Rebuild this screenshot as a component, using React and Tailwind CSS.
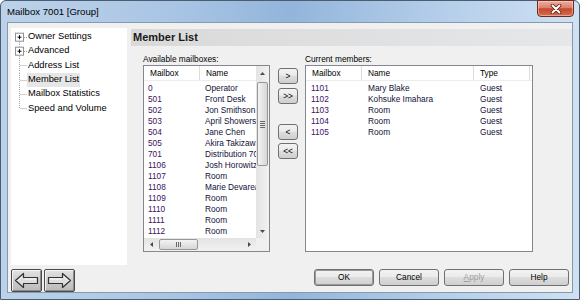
import React from 'react';

// rows of the "Available mailboxes" list
const available = [
  ['0', 'Operator'],
  ['501', 'Front Desk'],
  ['502', 'Jon Smithson'],
  ['503', 'April Showers'],
  ['504', 'Jane Chen'],
  ['505', 'Akira Takizawa'],
  ['701', 'Distribution 701'],
  ['1106', 'Josh Horowitz'],
  ['1107', 'Room'],
  ['1108', 'Marie Devareaux'],
  ['1109', 'Room'],
  ['1110', 'Room'],
  ['1111', 'Room'],
  ['1112', 'Room'],
];

const members = [
  ['1101', 'Mary Blake', 'Guest'],
  ['1102', 'Kohsuke Imahara', 'Guest'],
  ['1103', 'Room', 'Guest'],
  ['1104', 'Room', 'Guest'],
  ['1105', 'Room', 'Guest'],
];

const tree = [
  { label: 'Owner Settings', kind: 'plus-first' },
  { label: 'Advanced', kind: 'plus' },
  { label: 'Address List', kind: 'leaf' },
  { label: 'Member List', kind: 'leaf', selected: true },
  { label: 'Mailbox Statistics', kind: 'leaf' },
  { label: 'Speed and Volume', kind: 'last' },
];

const Tri = ({ dir }) => {
  if (dir === 'up') return <svg width="5" height="3" viewBox="0 0 5 3"><path d="M0 3 L2.5 0 L5 3 Z" fill="#4a4a4a" /></svg>;
  if (dir === 'down') return <svg width="5" height="3" viewBox="0 0 5 3"><path d="M0 0 L5 0 L2.5 3 Z" fill="#4a4a4a" /></svg>;
  if (dir === 'left') return <svg width="3" height="5" viewBox="0 0 3 5"><path d="M3 0 L3 5 L0 2.5 Z" fill="#4a4a4a" /></svg>;
  return <svg width="3" height="5" viewBox="0 0 3 5"><path d="M0 0 L0 5 L3 2.5 Z" fill="#4a4a4a" /></svg>;
};

// tree connector lines + expand boxes
const TreeGutter = ({ kind }) => (
  <svg width="17" height="14.4" viewBox="0 0 17 14.4" className="shrink-0">
    {kind === 'plus-first' && <line x1="8.5" y1="11.7" x2="8.5" y2="14.4" stroke="#a0a0a0" strokeDasharray="1 1" />}
    {kind === 'plus' && (
      <>
        <line x1="8.5" y1="0" x2="8.5" y2="2.7" stroke="#a0a0a0" strokeDasharray="1 1" />
        <line x1="8.5" y1="11.7" x2="8.5" y2="14.4" stroke="#a0a0a0" strokeDasharray="1 1" />
      </>
    )}
    {(kind === 'plus' || kind === 'plus-first') && (
      <>
        <rect x="4.5" y="3.2" width="8" height="8" fill="#fff" stroke="#919191" />
        <line x1="6.5" y1="7.2" x2="10.5" y2="7.2" stroke="#000" />
        <line x1="8.5" y1="5.2" x2="8.5" y2="9.2" stroke="#000" />
        <line x1="13" y1="7.5" x2="16" y2="7.5" stroke="#a0a0a0" strokeDasharray="1 1" />
      </>
    )}
    {kind === 'leaf' && <line x1="8.5" y1="0" x2="8.5" y2="14.4" stroke="#a0a0a0" strokeDasharray="1 1" />}
    {kind === 'last' && <line x1="8.5" y1="0" x2="8.5" y2="7.5" stroke="#a0a0a0" strokeDasharray="1 1" />}
    {(kind === 'leaf' || kind === 'last') && <line x1="9.5" y1="7.5" x2="16" y2="7.5" stroke="#a0a0a0" strokeDasharray="1 1" />}
  </svg>
);

const Btn = ({ children, className }) => (
  <div className={`flex items-center justify-center rounded-[3px] border border-[#707070] bg-[linear-gradient(#f2f2f2_0%,#ebebeb_45%,#dddddd_50%,#cfcfcf_100%)] text-[8.3px] ${className}`}>
    {children}
  </div>
);

const NavArrow = ({ flip }) => (
  <div className="flex h-[23px] w-[31px] items-center justify-center rounded-[2px] border border-[#4a4a4a] bg-[linear-gradient(#e2e2e2,#b9b9b9)] shadow-[inset_1px_1px_0_#f4f4f4,inset_-1px_-1px_0_#8c8c8c]">
    <svg width="25" height="17" viewBox="0 0 25 17" className={flip ? 'scale-x-[-1]' : ''}>
      <path d="M1.5 8.5 L9.5 1.5 L9.5 5.5 L23.5 5.5 L23.5 11.5 L9.5 11.5 L9.5 15.5 Z" fill="#dedede" stroke="#333" strokeWidth="1.2" strokeLinejoin="round" />
      <path d="M4 8.5 L8 5 M10.5 7 L22 7" stroke="#fafafa" strokeWidth="1" fill="none" />
    </svg>
  </div>
);

const HeaderCell = ({ children, className }) => (
  <div className={`flex h-full shrink-0 items-center border-r border-[#dcdcdc] pl-[6px] ${className}`}>{children}</div>
);

export default function App() {
  return (
    <div className="h-[300px] w-[580px] overflow-hidden bg-white font-['Liberation_Sans',Arial,sans-serif]">
      <div className="flex h-full w-full flex-col rounded-t-[6px] border border-[#4c5d70] bg-[linear-gradient(90deg,#bcd2ea_0%,#a9c5e4_30%,#93b5db_50%,#b3cde9_75%,#cfe1f3_100%)]">
        {/* title bar */}
        <div className="flex h-[21px] shrink-0 items-start justify-between pl-[6px] pr-[5px]">
          <span className="text-[9.6px] leading-[21px] text-black">Mailbox 7001 [Group]</span>
          <div className="-mt-[1px] flex h-[17px] w-[37px] items-center justify-center rounded-b-[4px] border border-[#6e2a1d] bg-[linear-gradient(#eab0a2_0%,#dc806c_45%,#c5472d_52%,#d4704f_100%)] shadow-[inset_0_0_0_1px_rgba(255,220,210,0.5)]">
            <svg width="12" height="10" viewBox="0 0 12 10">
              <path d="M2.5 1.5 L9.5 8.5 M9.5 1.5 L2.5 8.5" stroke="#5a1c12" strokeWidth="3.6" strokeLinecap="round" />
              <path d="M2.5 1.5 L9.5 8.5 M9.5 1.5 L2.5 8.5" stroke="#fff" strokeWidth="2" strokeLinecap="round" />
            </svg>
          </div>
        </div>

        {/* client area */}
        <div className="mx-[6px] mb-[6px] flex flex-1 flex-col border border-[#8799ad] bg-[#f0f0f0]">
          <div className="flex h-[242px] shrink-0 pl-[3px] pt-[5px]">
            {/* navigation tree */}
            <div className="h-[237px] w-[116px] shrink-0 bg-white pt-[1.5px] text-[9.3px] text-black">
              {tree.map((t) => (
                <div key={t.label} className="flex h-[14.4px] items-center pl-0">
                  <TreeGutter kind={t.kind} />
                  <span className={`flex h-full items-center whitespace-nowrap px-[1px] -ml-[1px] ${t.selected ? 'bg-[#e6e6e6]' : ''}`}>{t.label}</span>
                </div>
              ))}
            </div>

            {/* page */}
            <div className="ml-[4px] flex flex-1 flex-col">
              <div className="mt-[1px] flex h-[17px] items-center bg-[linear-gradient(90deg,#d9d9d9,#e6e7e9)] pl-[2px] text-[11px] font-bold text-[#1a1a1a]">
                Member List
              </div>

              <div className="flex pl-[12px] pt-[7px] text-[8.3px]">
                {/* available */}
                <div className="flex flex-col">
                  <div className="h-[12px] leading-[12px] text-black">Available mailboxes:</div>
                  <div className="flex h-[187px] w-[127px] flex-col border border-[#828790] bg-white">
                    <div className="flex h-[172px]">
                      <div className="w-[112px] overflow-hidden">
                        <div className="flex h-[15px] w-[200px] border-b border-[#ececec] text-black">
                          <HeaderCell className="w-[56px]">Mailbox</HeaderCell>
                          <HeaderCell className="w-[90px]">Name</HeaderCell>
                        </div>
                        <div className="pt-[2px]">
                          {available.map(([m, n]) => (
                            <div key={m} className="flex h-[11px] w-[200px] leading-[11px]">
                              <span className="w-[56px] shrink-0 pl-[4px] text-[#3d1162]">{m}</span>
                              <span className="w-[90px] shrink-0 whitespace-nowrap pl-[5px] text-[#111138]">{n}</span>
                            </div>
                          ))}
                        </div>
                      </div>
                      {/* vertical scrollbar */}
                      <div className="flex w-[13px] flex-col bg-[linear-gradient(90deg,#e3e3e3,#f2f2f2)]">
                        <div className="flex h-[15px] items-center justify-center"><Tri dir="up" /></div>
                        <div className="mx-[1px] mt-[1px] flex h-[84px] flex-col items-center justify-center gap-[1px] rounded-[2px] border border-[#979797] bg-[linear-gradient(90deg,#f3f3f3,#d6d6d6)]">
                          <div className="h-px w-[5px] bg-[#6a6a6a]" />
                          <div className="h-px w-[5px] bg-[#6a6a6a]" />
                          <div className="h-px w-[5px] bg-[#6a6a6a]" />
                          <div className="h-px w-[5px] bg-[#6a6a6a]" />
                        </div>
                        <div className="flex-1" />
                        <div className="flex h-[14px] items-center justify-center"><Tri dir="down" /></div>
                      </div>
                    </div>
                    <div className="flex h-[13px]">
                      {/* horizontal scrollbar */}
                      <div className="flex w-[112px] items-center bg-[linear-gradient(#e3e3e3,#f2f2f2)]">
                        <div className="flex w-[14px] justify-center"><Tri dir="left" /></div>
                        <div className="ml-[1px] flex h-[11px] w-[39px] items-center justify-center gap-[1px] rounded-[2px] border border-[#979797] bg-[linear-gradient(#f3f3f3,#d6d6d6)]">
                          <div className="h-[5px] w-px bg-[#6a6a6a]" />
                          <div className="h-[5px] w-px bg-[#6a6a6a]" />
                          <div className="h-[5px] w-px bg-[#6a6a6a]" />
                        </div>
                        <div className="flex-1" />
                        <div className="flex w-[13px] justify-center"><Tri dir="right" /></div>
                      </div>
                      <div className="w-[13px] bg-[#f0f0f0]" />
                    </div>
                  </div>
                </div>

                {/* move buttons */}
                <div className="ml-[8px] flex w-[20px] flex-col pt-[15px] text-black">
                  <Btn className="h-[16px]">&gt;</Btn>
                  <Btn className="mt-[4px] h-[16px]">&gt;&gt;</Btn>
                  <Btn className="mt-[20px] h-[16px]">&lt;</Btn>
                  <Btn className="mt-[3px] h-[16px]">&lt;&lt;</Btn>
                </div>

                {/* current */}
                <div className="ml-[7px] flex flex-col">
                  <div className="h-[12px] leading-[12px] text-black">Current members:</div>
                  <div className="h-[187px] w-[228px] overflow-hidden border border-[#828790] bg-white">
                    <div className="flex h-[15px] border-b border-[#ececec] text-black">
                      <HeaderCell className="w-[56px]">Mailbox</HeaderCell>
                      <HeaderCell className="w-[112px]">Name</HeaderCell>
                      <HeaderCell className="w-[56px]">Type</HeaderCell>
                    </div>
                    <div className="pt-[2px]">
                      {members.map(([m, n, t]) => (
                        <div key={m} className="flex h-[11px] leading-[11px]">
                          <span className="w-[56px] shrink-0 pl-[5px] text-[#3d1162]">{m}</span>
                          <span className="w-[112px] shrink-0 pl-[6px] text-[#111138]">{n}</span>
                          <span className="w-[56px] shrink-0 pl-[6px] text-[#111138]">{t}</span>
                        </div>
                      ))}
                    </div>
                  </div>
                </div>
              </div>
            </div>
          </div>

          {/* bottom row */}
          <div className="mt-[4px] flex items-start pl-[3px] pr-[3px]">
            <div className="flex gap-[2px]">
              <NavArrow />
              <NavArrow flip />
            </div>
            <div className="ml-auto flex gap-[5px]">
              <Btn className="h-[17px] w-[60px] border-[#3a3a3a] text-black shadow-[inset_0_0_0_1px_#9a9a9a]">OK</Btn>
              <Btn className="h-[17px] w-[60px] text-black">Cancel</Btn>
              <Btn className="h-[17px] w-[60px] text-[#a0a0a0]"><span><span className="underline">A</span>pply</span></Btn>
              <Btn className="h-[17px] w-[60px] text-black">Help</Btn>
            </div>
          </div>
        </div>
      </div>
    </div>
  );
}
